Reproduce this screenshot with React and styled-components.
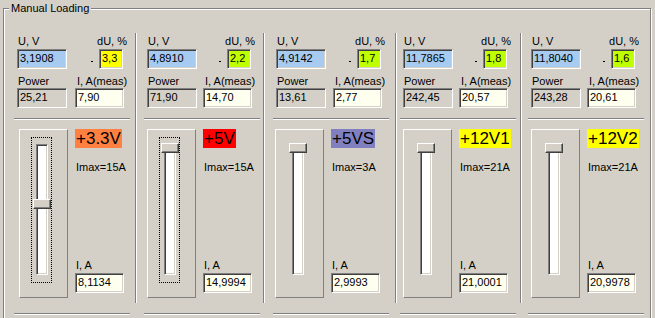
import React from "react";
import styled, { createGlobalStyle } from "styled-components";

const Global = createGlobalStyle`
  html, body { margin: 0; padding: 0; overflow: hidden; background: #D4D0C8; }
  body { font-family: "Liberation Sans", Arial, sans-serif; font-size: 11px; color: #000; }
`;

const Page = styled.div`
  width: 655px;
  height: 318px;
  overflow: hidden;
  background: #D4D0C8;
  padding-top: 8px;
  box-sizing: border-box;
`;

const GroupBox = styled.div`
  position: relative;
  margin-left: 3px;
  width: 648px;
  height: 330px;
  box-sizing: border-box;
  border: 1px solid #808080;
  box-shadow: inset 1px 1px 0 #fff, 1px 1px 0 #fff;
`;

const Legend = styled.span`
  position: absolute;
  top: -7px;
  left: 5px;
  padding: 0 2px;
  line-height: 13px;
  background: #D4D0C8;
  white-space: nowrap;
`;

const Columns = styled.div`
  display: flex;
  margin-top: 24px;
`;

const Sep = styled.div`
  flex: none;
  width: 2px;
  height: 270px;
  box-sizing: border-box;
  border-left: 1px solid #808080;
  border-right: 1px solid #fff;
`;

const Column = styled.div`
  flex: none;
  width: ${(p) => p.$w}px;
  padding-left: ${(p) => p.$pad}px;
  box-sizing: border-box;
  display: flex;
  flex-direction: column;
`;

const LabelRow = styled.div`
  display: flex;
  justify-content: ${(p) => (p.$start ? "flex-start" : "space-between")};
  width: ${(p) => p.$w}px;
  height: 13px;
  line-height: 13px;
  margin-top: ${(p) => p.$mt}px;
  white-space: nowrap;
`;

const Label = styled.span`
  padding-left: 1px;
  width: ${(p) => (p.$w ? `${p.$w}px` : "auto")};
  flex: none;
`;

const EditRow = styled.div`
  display: flex;
  align-items: flex-start;
  margin-top: ${(p) => p.$mt}px;
`;

const Edit = styled.div`
  flex: none;
  width: ${(p) => p.$w}px;
  height: 20px;
  margin-left: ${(p) => p.$ml || 0}px;
  box-sizing: border-box;
  border: 1px solid;
  border-color: #808080 #fff #fff #808080;
  box-shadow: inset 1px 1px 0 #404040, inset -1px -1px 0 #D4D0C8;
  background: ${(p) => p.$bg};
  padding: 0 0 0 2px;
  line-height: 16px;
  overflow: hidden;
  white-space: nowrap;
`;

const Dash = styled.span`
  flex: none;
  width: 2px;
  height: 1px;
  margin: 12px 0 0 ${(p) => p.$ml}px;
  background: #000;
`;

const HLine = styled.div`
  width: 116px;
  height: 2px;
  margin-left: -3px;
  margin-top: ${(p) => p.$mt}px;
  box-sizing: border-box;
  border-top: 1px solid #808080;
  border-bottom: 1px solid #fff;
`;

const Bottom = styled.div`
  display: flex;
  margin-top: 9px;
  margin-left: ${(p) => p.$fx}px;
`;

const SliderFrame = styled.div`
  position: relative;
  flex: none;
  width: 49px;
  height: 169px;
  box-sizing: border-box;
  border: 1px solid;
  border-color: #fff #808080 #808080 #fff;
`;

const FocusRect = styled.div`
  position: absolute;
  left: 11px;
  top: 7px;
  width: 21px;
  height: 146px;
  box-sizing: border-box;
  border: 1px dotted #000;
`;

const Channel = styled.div`
  position: absolute;
  left: 16px;
  top: 14px;
  width: 12px;
  height: 131px;
  box-sizing: border-box;
  border: 1px solid;
  border-color: #808080 #fff #fff #808080;
  box-shadow: inset 1px 1px 0 #404040, inset -1px -1px 0 #D4D0C8;
  background: #fff;
`;

const Thumb = styled.div`
  position: absolute;
  left: -4px;
  width: 18px;
  height: 10px;
  box-sizing: border-box;
  background: #D4D0C8;
  border: 1px solid;
  border-color: #fff #404040 #404040 #fff;
  box-shadow: inset -1px -1px 0 #808080;
`;

const SideCol = styled.div`
  display: flex;
  flex-direction: column;
  margin-left: 7px;
`;

const Tag = styled.span`
  align-self: flex-start;
  height: 19px;
  line-height: 19px;
  font-size: 17px;
  padding: 0 1px 0 1px;
  background: ${(p) => p.$bg};
  white-space: nowrap;
`;

const SideText = styled.span`
  height: 13px;
  line-height: 13px;
  padding-left: 1px;
  margin-top: ${(p) => p.$mt}px;
  white-space: nowrap;
`;

const SideEdit = styled(Edit)`
  margin-top: 1px;
`;

const GREEN = "#C0FF00";
const BLUE = "#A6CAF0";
const IVORY = "#FFFFF0";
const GRAY = "#D4D0C8";

const cols = [
  { w: 131, pad: 13, rx: 58, fx: 2, u: "3,1908", du: "3,3", duBg: "#FFFF00", p: "25,21", im: "7,90", tag: "+3.3V", tagBg: "#FF8040", imax: 15, ia: "8,1134", focus: true },
  { w: 126, pad: 10, rx: 56, fx: 0, u: "4,8910", du: "2,2", duBg: GREEN, p: "71,90", im: "14,70", tag: "+5V", tagBg: "#FF0000", imax: 15, ia: "14,9994", focus: true },
  { w: 130, pad: 11, rx: 57, fx: -1, u: "4,9142", du: "1,7", duBg: GREEN, p: "13,61", im: "2,77", tag: "+5VS", tagBg: "#8080C0", imax: 3, ia: "2,9993" },
  { w: 123, pad: 6, rx: 56, fx: 0, u: "11,7865", du: "1,8", duBg: GREEN, p: "242,45", im: "20,57", tag: "+12V1", tagBg: "#FFFF00", imax: 21, ia: "21,0001" },
  { w: 128, pad: 9, rx: 56, fx: 0, u: "11,8040", du: "1,6", duBg: GREEN, p: "243,28", im: "20,61", tag: "+12V2", tagBg: "#FFFF00", imax: 21, ia: "20,9978" },
];

function thumbTop(ia, imax) {
  const v = Math.min(1, Math.max(0, parseFloat(ia.replace(",", ".")) / imax));
  return Math.round(-2 + (1 - v) * 123);
}

function PowerColumn({ c }) {
  return (
    <Column $w={c.w} $pad={c.pad}>
      <LabelRow $w={c.rx + 52} $mt={2}>
        <Label>U, V</Label>
        <Label>dU, %</Label>
      </LabelRow>
      <EditRow $mt={1}>
        <Edit $w={50} $bg={BLUE}>{c.u}</Edit>
        <Dash $ml={c.rx - 50 + 16} />
        <Edit $w={24} $ml={6} $bg={c.duBg}>{c.du}</Edit>
      </EditRow>
      <LabelRow $w={c.rx + 52} $mt={6} $start>
        <Label $w={c.rx}>Power</Label>
        <Label>I, A(meas)</Label>
      </LabelRow>
      <EditRow $mt={0}>
        <Edit $w={50} $bg={GRAY}>{c.p}</Edit>
        <Edit $w={49} $ml={c.rx - 50} $bg={IVORY}>{c.im}</Edit>
      </EditRow>
      <HLine $mt={10} />
      <Bottom $fx={c.fx}>
        <SliderFrame>
          {c.focus && <FocusRect />}
          <Channel>
            <Thumb style={{ top: thumbTop(c.ia, c.imax) }} />
          </Channel>
        </SliderFrame>
        <SideCol>
          <Tag $bg={c.tagBg}>{c.tag}</Tag>
          <SideText $mt={13}>Imax={c.imax}A</SideText>
          <SideText $mt={85}>I, A</SideText>
          <SideEdit $w={49} $bg={IVORY}>{c.ia}</SideEdit>
        </SideCol>
      </Bottom>
      <HLine $mt={15} />
    </Column>
  );
}

export default function App() {
  return (
    <Page>
      <Global />
      <GroupBox>
        <Legend>Manual Loading</Legend>
        <Columns>
          {cols.map((c, i) => (
            <React.Fragment key={c.tag}>
              {i > 0 && <Sep />}
              <PowerColumn c={c} />
            </React.Fragment>
          ))}
        </Columns>
      </GroupBox>
    </Page>
  );
}
